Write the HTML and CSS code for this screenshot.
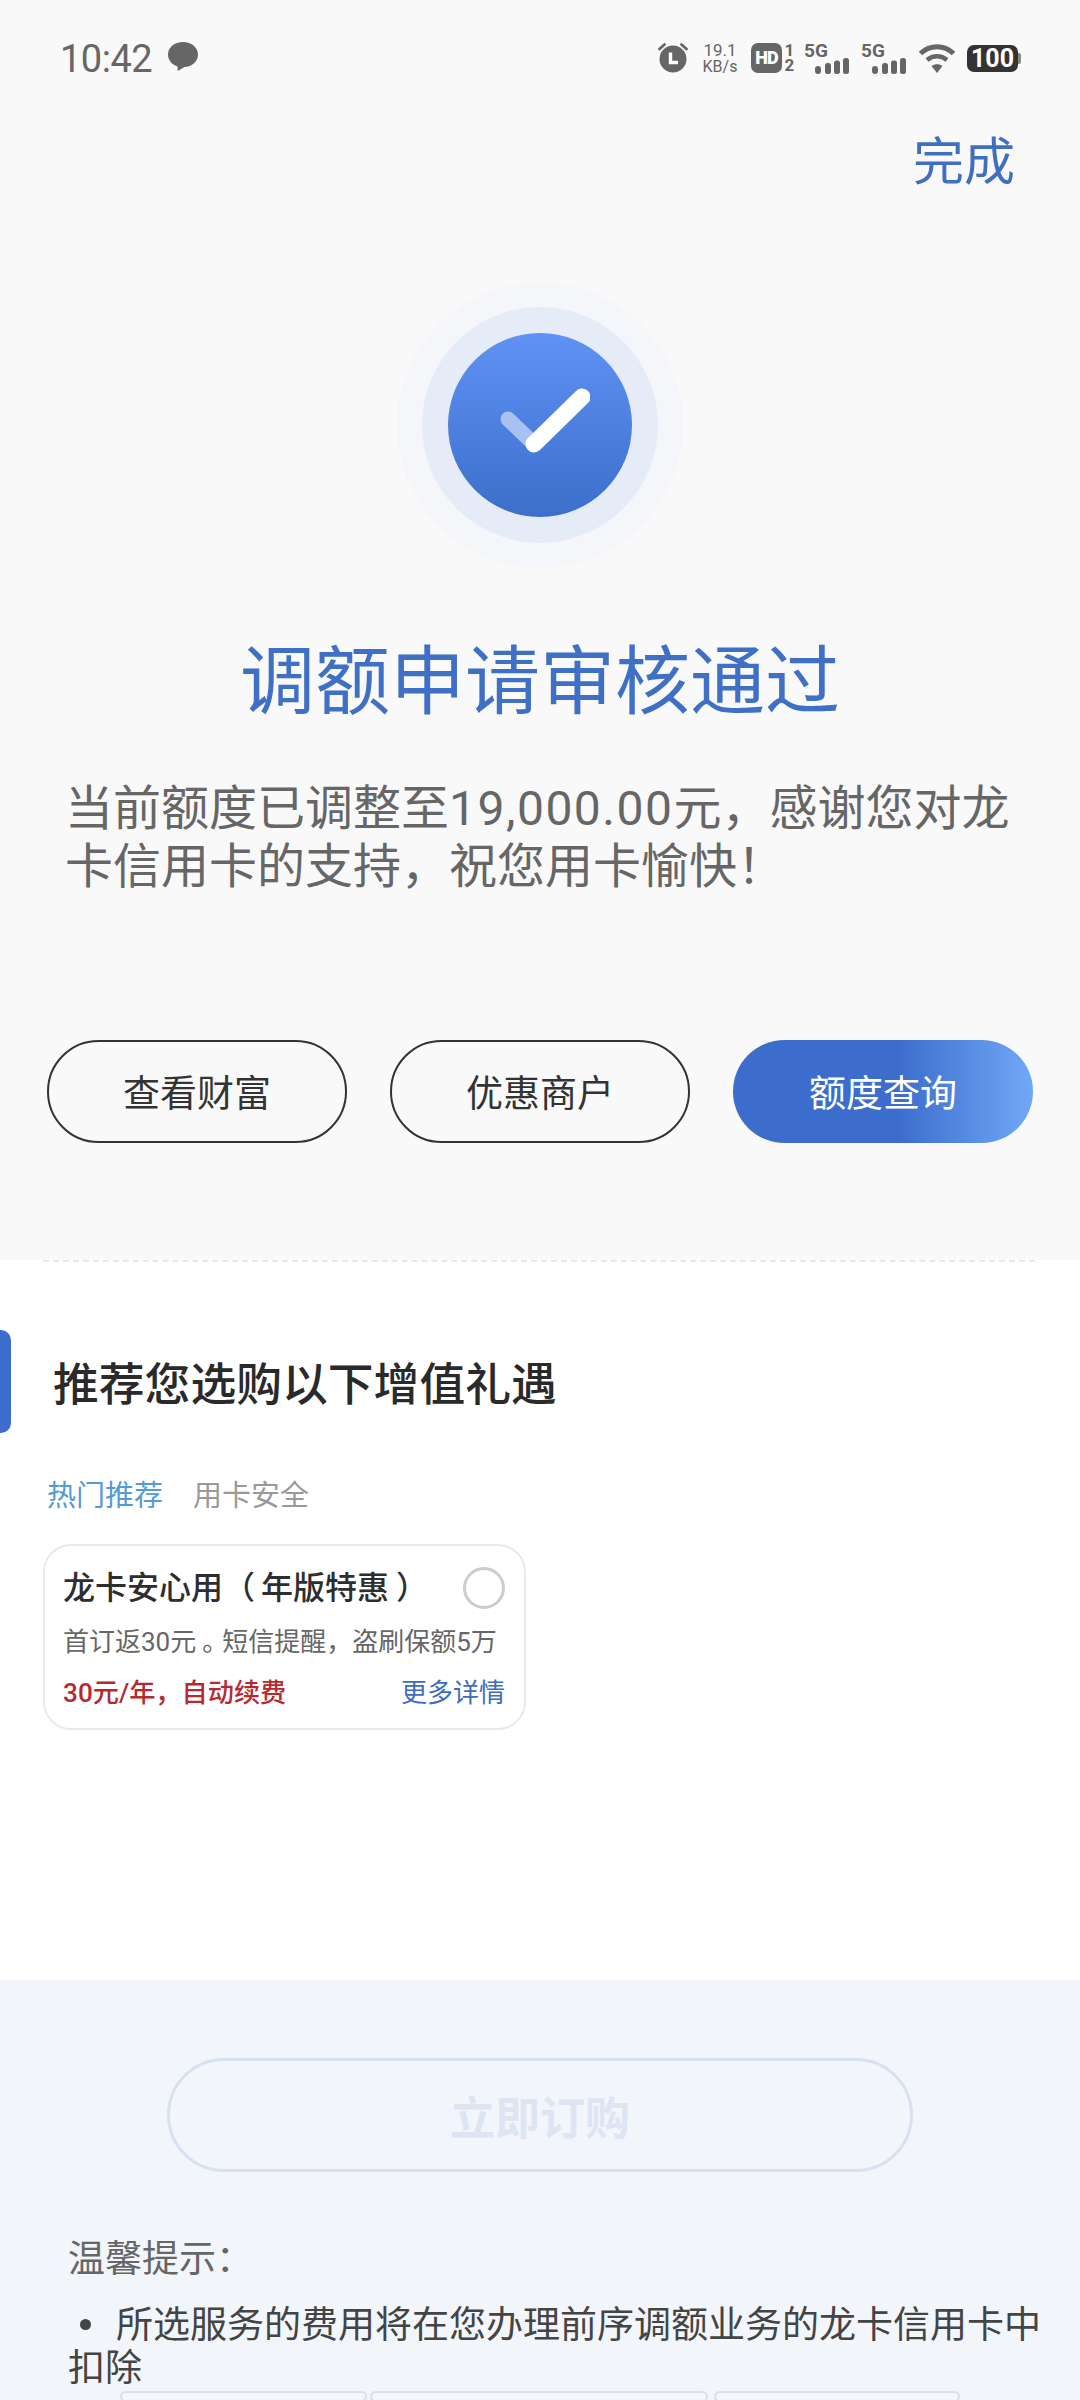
FILE: index.html
```html
<!DOCTYPE html>
<html lang="zh-CN">
<head>
<meta charset="utf-8">
<title>调额申请审核通过</title>
<link rel="stylesheet" href="styles.css">
</head>
<body>
<div class="page">
  <section class="top">
    <div class="status">
      <div class="status-left">
        <span class="time">10:42</span>
        <svg class="msg" viewBox="0 0 30 29"><path d="M15 0C6.700 0 0 5.300 0 12.500C0 18.500 4.500 23 9.500 24.500L9.800 29L16.500 25C24 24.800 30 19.500 30 12.500C30 5.300 23.300 0 15 0Z" fill="#666"/></svg>
      </div>
      <div class="status-right">
        <svg class="ic-alarm" viewBox="0 0 30 30"><circle cx="15" cy="16" r="13.500" fill="#666"/><path d="M1.500 6L6.500 1.500M28.500 6L23.500 1.500" stroke="#666" stroke-width="2.800" stroke-linecap="round"/><path d="M12.500 9.500V19.500H20" fill="none" stroke="#fff" stroke-width="3.400"/></svg>
        <div class="speed"><span class="speed-num">19.1</span><span class="speed-unit">KB/s</span></div>
        <div class="hd-group">
          <span class="hd">HD</span>
          <span class="sim">1 2</span>
        </div>
        <div class="net">
          <span class="net-label">5G</span>
          <svg class="bars" viewBox="0 0 36 16"><rect x="1" y="8" width="6" height="8" rx="3" fill="#666"/><rect x="11" y="5" width="6" height="11" rx="2.500" fill="#666"/><rect x="20" y="2.500" width="6" height="13.500" rx="2.500" fill="#666"/><rect x="29" y="0" width="6" height="16" rx="2.500" fill="#666"/></svg>
        </div>
        <div class="net">
          <span class="net-label">5G</span>
          <svg class="bars" viewBox="0 0 36 16"><rect x="1" y="8" width="6" height="8" rx="3" fill="#666"/><rect x="11" y="5" width="6" height="11" rx="2.500" fill="#666"/><rect x="20" y="2.500" width="6" height="13.500" rx="2.500" fill="#666"/><rect x="29" y="0" width="6" height="16" rx="2.500" fill="#666"/></svg>
        </div>
        <svg class="wifi" viewBox="0 0 36 29"><path d="M1.500 9.500C11 0.500 25 0.500 34.500 9.500" fill="none" stroke="#666" stroke-width="5"/><path d="M8 16C14 11 22 11 28 16" fill="none" stroke="#666" stroke-width="4.500"/><path d="M12.500 22C16 19.800 20 19.800 23.500 22L18 29Z" fill="#666"/></svg>
        <div class="battery"><span class="batt-body">100</span><span class="batt-cap"></span></div>
      </div>
    </div>
    <div class="done-row"><span class="done">完成</span></div>
    <div class="result-icon">
      <div class="ring-outer">
        <div class="ring-mid">
          <div class="ring-inner">
            <svg class="check" viewBox="0 0 100 80"><path d="M18 34L44 59" stroke="#a9c1f0" stroke-width="15" stroke-linecap="round" fill="none"/><path d="M44 59L92 12" stroke="#fff" stroke-width="17" stroke-linecap="round" fill="none"/></svg>
          </div>
        </div>
      </div>
    </div>
    <h1 class="headline">调额申请审核通过</h1>
    <p class="lead">当前额度已调整至<span class="num">19,000.00</span>元，感谢您对龙<br>卡信用卡的支持，祝您用卡愉快！</p>
    <div class="actions">
      <a class="btn">查看财富</a>
      <a class="btn">优惠商户</a>
      <a class="btn btn-primary">额度查询</a>
    </div>
  </section>
  <section class="middle">
    <div class="dash"></div>
    <div class="section-head">
      <span class="accent"></span>
      <h2 class="section-title">推荐您选购以下增值礼遇</h2>
    </div>
    <div class="tabs">
      <span class="tab tab-active">热门推荐</span>
      <span class="tab">用卡安全</span>
    </div>
    <div class="card">
      <div class="card-row">
        <span class="card-title">龙卡安心用<span class="paren-open">（</span>年版特惠<span class="paren-close">）</span></span>
        <span class="radio"></span>
      </div>
      <div class="card-desc">首订返30元<span class="stop">。</span>短信提醒，盗刷保额5万</div>
      <div class="card-row card-foot">
        <span class="price">30元/年，自动续费</span>
        <span class="more">更多详情</span>
      </div>
    </div>
  </section>
  <section class="bottom">
    <button class="buy">立即订购</button>
    <div class="tips">
      <div class="tips-title">温馨提示：</div>
      <div class="tip-item"><span class="bullet"></span>所选服务的费用将在您办理前序调额业务的龙卡信用卡中扣除</div>
    </div>
    <div class="table-head">
      <span class="cell cell-a"></span>
      <span class="cell cell-b"></span>
      <span class="cell cell-c"></span>
    </div>
  </section>
</div>
</body>
</html>
```
FILE: styles.css
```css
* { box-sizing: border-box; }
html, body { margin: 0; padding: 0; }
body {
  width: 1080px;
  height: 2400px;
  overflow: hidden;
  background: #fff;
  font-family: Roboto, "Noto Sans CJK SC", sans-serif;
}
.page { display: flex; flex-direction: column; height: 2400px; overflow: hidden; }

.top { height: 1260px; background: #f9f9fa; flex: none; }
.status { height: 128px; padding: 0 59px 0 60px; display: flex; justify-content: space-between; align-items: flex-start; }
.status-left { display: flex; align-items: center; gap: 16px; margin-top: 37px; }
.time { font-size: 38px; line-height: 44px; color: #666; letter-spacing: -0.500px; }
.msg { width: 30px; height: 29px; display: block; margin-top: -5px; }
.status-right { display: flex; align-items: center; margin-top: 42px; height: 32px; }
.ic-alarm { width: 30px; height: 30px; display: block; }
.speed { display: flex; flex-direction: column; margin-left: 13px; width: 38px; color: #666; text-align: center; }
.speed-num { font-size: 17px; line-height: 17px; }
.speed-unit { font-size: 16px; line-height: 15px; }
.hd-group { display: flex; align-items: center; margin-left: 12px; }
.hd { width: 31px; height: 30px; background: #666; color: #fff; border-radius: 7px; font-size: 18px; font-weight: 900; line-height: 30px; text-align: center; letter-spacing: -1px; }
.sim { display: block; color: #666; font-size: 17px; font-weight: 700; line-height: 15px; margin-left: 2px; width: 11px; text-align: center; }
.net { position: relative; width: 40px; height: 32px; margin-left: 9px; }
.net + .net { margin-left: 17px; }
.net-label { position: absolute; left: 0; top: 0; color: #666; font-size: 19px; font-weight: 700; line-height: 18px; }
.bars { position: absolute; left: 10px; bottom: 0; width: 36px; height: 16px; display: block; }
.wifi { width: 36px; height: 29px; margin-left: 18px; display: block; }
.battery { display: flex; align-items: center; margin-left: 12px; }
.batt-body { width: 51px; height: 27px; background: #333; color: #fff; border-radius: 7px; font-size: 25px; font-weight: 700; line-height: 27px; text-align: center; }
.batt-cap { width: 3px; height: 11px; background: #888; border-radius: 0 2px 2px 0; }

.done-row { display: flex; justify-content: flex-end; padding-right: 65px; }
.done { font-size: 51px; line-height: 70px; color: #3f6fc0; }
.result-icon { display: flex; justify-content: center; margin-top: 84px; }
.ring-outer, .ring-mid, .ring-inner { border-radius: 50%; display: flex; align-items: center; justify-content: center; }
.ring-outer { width: 286px; height: 286px; background: #f5f6fa; }
.ring-mid { width: 236px; height: 236px; background: #e6ecf7; }
.ring-inner { width: 184px; height: 184px; background: linear-gradient(180deg, #5f92f4 0%, #3c6ecb 100%); }
.check { width: 100px; height: 80px; display: block; }

.headline { margin: 69px 0 0; font-size: 75px; line-height: 90px; font-weight: 400; color: #3f70c6; text-align: center; }
.lead { margin: 53px 60px 0 65px; font-size: 48px; line-height: 58px; color: #666; white-space: nowrap; }
.num { letter-spacing: 1.500px; }
.actions { display: flex; gap: 43px; padding: 0 47px; margin-top: 144px; }
.btn { width: 300px; height: 103px; border: 2px solid #333; border-radius: 52px; padding-bottom: 2px; display: flex; align-items: center; justify-content: center; font-size: 37px; color: #333; }
.btn-primary { border: 0; color: #fff; background: linear-gradient(90deg, #3c6dcd 0%, #3c6dcd 55%, #70a8f6 100%); }

.middle { height: 720px; flex: none; background: #fff; position: relative; }
.dash { position: absolute; left: 43px; right: 45px; top: 0; border-top: 2px dashed #e8e8e8; }
.section-head { display: flex; align-items: center; height: 103px; margin-top: 70px; }
.accent { width: 11px; height: 103px; background: #3c6dcd; border-radius: 0 10px 10px 0; flex: none; }
.section-title { margin: 0 0 0 42px; padding-top: 9px; font-size: 45.800px; line-height: 60px; font-weight: 500; color: #2a2a2a; }
.tabs { display: flex; gap: 30px; padding-left: 47px; margin-top: 43px; }
.tab { font-size: 29px; line-height: 40px; color: #999; }
.tab-active { color: #559ad8; }
.card { width: 483px; height: 186px; margin: 28px 0 0 43px; border: 2px solid #e9e9e9; border-radius: 28px; padding: 18px 19px 0 18px; background: #fff; }
.card-row { display: flex; justify-content: space-between; align-items: center; }
.card-title { font-size: 32px; line-height: 48px; font-weight: 500; color: #2e2e2e; white-space: nowrap; }
.paren-open { margin-right: 6px; }
.paren-close { margin-left: 7px; }
.radio { width: 42px; height: 42px; border: 3px solid #ccc; border-radius: 50%; flex: none; }
.card-desc { font-size: 26px; line-height: 40px; color: #666; margin-top: 10px; white-space: nowrap; }
.stop { margin-left: 6px; letter-spacing: -6px; }
.card-foot { margin-top: 11px; }
.price { font-size: 26.200px; line-height: 40px; font-weight: 500; color: #b62a2f; }
.more { font-size: 26px; line-height: 40px; color: #3f6cc0; }

.bottom { flex: 1; background: #f2f5fa; padding-top: 78px; min-height: 0; }
.buy { display: block; width: 746px; height: 114px; margin-left: 167px; border: 3px solid #d8e1f0; border-radius: 57px; background: transparent; font-family: inherit; font-size: 45px; font-weight: 700; color: #dde5f3; padding: 0; }
.tips { padding: 0 24px 0 68px; margin-top: 62px; }
.tips-title { font-size: 37px; line-height: 52px; color: #666; }
.tip-item { margin-top: 18px; font-size: 37px; line-height: 43px; color: #444; }
.bullet { display: inline-block; width: 11px; height: 11px; border-radius: 50%; background: #444; margin: 0 25px 0 12px; vertical-align: 8px; }
.table-head { display: flex; padding-left: 120px; margin-top: 1px; }
.cell { height: 11px; background: #f4f7fb; border: 2px solid #dce1e9; border-radius: 6px; flex: none; }
.cell-a { width: 247px; }
.cell-b { width: 338px; margin-left: 3px; }
.cell-c { width: 246px; margin-left: 6px; }
```
